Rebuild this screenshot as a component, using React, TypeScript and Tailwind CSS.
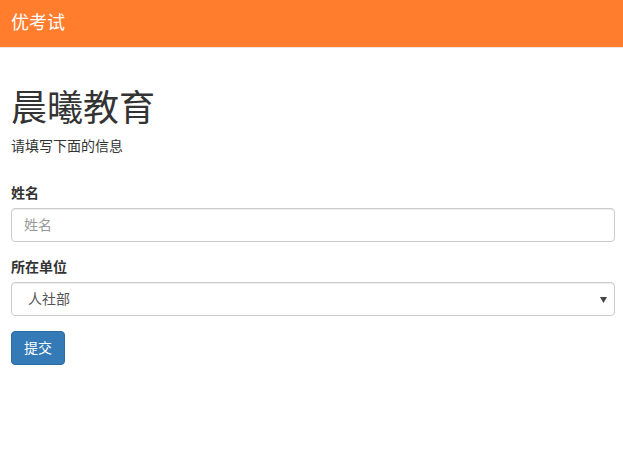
import React from "react";

const font = { fontFamily: '"Liberation Sans", "Noto Sans CJK SC", sans-serif' };

// 报名表单页
export default function App() {
    return (
        <div className="min-h-[468px] bg-white text-[#333] text-[14px]" style={font}>
            <div className="h-[48px] bg-[#ff7d2d] border-b border-[#f0e6de] flex items-center px-[11px] pb-[2px]">
                <span className="text-white text-[18px] leading-none">优考试</span>
            </div>

            <div className="pl-[11px] pr-[8px]">
                <h1 className="mt-[41px] mb-[7px] text-[36px] leading-[40px] font-normal">晨曦教育</h1>
                <p className="mb-[27px] leading-[20px]">请填写下面的信息</p>

                <div className="mb-[15px]">
                    <label className="block font-bold leading-[20px] mb-[5px]">姓名</label>
                    <input
                        type="text"
                        placeholder="姓名"
                        className="block w-full h-[34px] px-[12px] border border-[#ccc] rounded-[4px] shadow-[inset_0_1px_1px_rgba(0,0,0,0.075)] placeholder:text-[#999] outline-none"
                    />
                </div>

                <div className="mb-[15px]">
                    <label className="block font-bold leading-[20px] mb-[5px]">所在单位</label>
                    <div className="relative flex items-center w-full h-[34px] pl-[16px] pr-[12px] border border-[#ccc] rounded-[4px] shadow-[inset_0_1px_1px_rgba(0,0,0,0.075)] text-[#555]">
                        <span>人社部</span>
                        <svg className="absolute right-[7px] top-[14px]" width="7" height="6" viewBox="0 0 7 6">
                            <path d="M0 0 L7 0 L3.5 6 Z" fill="#444" />
                        </svg>
                    </div>
                </div>

                <button className="h-[34px] px-[12px] bg-[#337ab7] border border-[#2e6da4] rounded-[4px] text-white leading-[20px]">
                    提交
                </button>
            </div>
        </div>
    );
}
